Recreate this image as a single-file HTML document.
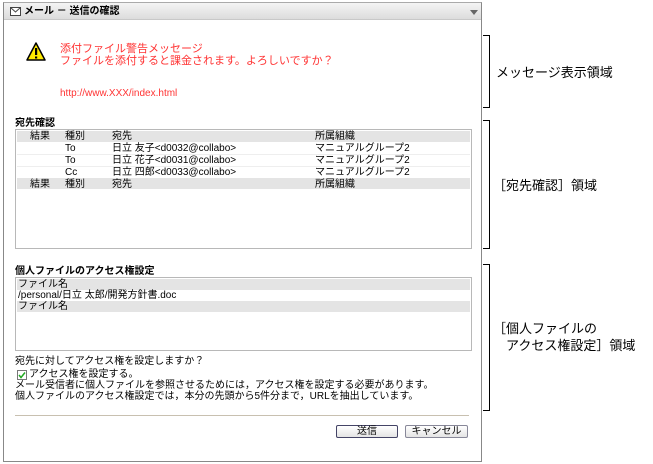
<!DOCTYPE html>
<html><head><meta charset="utf-8"><style>
*{margin:0;padding:0;box-sizing:border-box}
body{width:653px;height:464px;background:#fff;position:relative;overflow:hidden;font-family:"Liberation Sans","Noto Sans CJK JP",sans-serif;font-size:10px;color:#000}
.a{position:absolute;white-space:nowrap;line-height:11px}
.win{position:absolute;left:3px;top:2px;width:479px;height:460px;border:1px solid #888;border-top:1px solid #aaa}
.tb{position:absolute;left:0;top:0;width:100%;height:17px;background:linear-gradient(#f4f4f4,#dcdcdc);border-bottom:1px solid #c8c8c8}
.box{position:absolute;border:1px solid #b8b8b8;background:#fff}
.hr{position:absolute;left:1px;right:1px;height:11px;background:#e4e4e4}
.r{position:absolute;left:1px;right:1px;height:1px;background:#eee}
.br{position:absolute;left:483px;width:7px;border:1px solid #000;border-left:none}
.lb{font-size:13px;line-height:17px}
.btn{position:absolute;height:13px;border:1px solid #556;border-radius:2px;background:linear-gradient(#fff,#e4e4e4);font-size:10px;text-align:center;line-height:11px}
</style></head><body>
<div class="win">
<div class="tb">
<svg class="a" style="left:6px;top:4px" width="11" height="9"><rect x="0.5" y="0.5" width="10" height="8" fill="#fff" stroke="#444"/><path d="M0.5 0.5L5.5 5L10.5 0.5" fill="none" stroke="#444"/></svg>
<div class="a" style="left:20px;top:3px;font-size:10px;font-weight:bold">メール － 送信の確認</div>
<svg class="a" style="left:466px;top:7px" width="8" height="5"><path d="M0 0H8L4 5Z" fill="#666"/></svg>
</div>
</div>
<svg class="a" style="left:26px;top:42px" width="20" height="20"><path d="M10 1L19 18H1Z" fill="#ffea00" stroke="#000" stroke-width="1.5" stroke-linejoin="round"/><rect x="9" y="6" width="2.2" height="7" fill="#000"/><rect x="9" y="14.5" width="2.2" height="2" fill="#000"/></svg>
<div class="a" style="left:60px;top:43px;color:#f33;font-size:11px;line-height:12px">添付ファイル警告メッセージ<br>ファイルを添付すると課金されます。よろしいですか？</div>
<div class="a" style="left:60px;top:88px;color:#f33;font-size:10px">http://www.XXX/index.html</div>
<div class="a" style="left:15px;top:118px;font-weight:bold">宛先確認</div>
<div class="box" style="left:15px;top:129px;width:457px;height:120px">
<div class="hr" style="top:1px"></div>
<div class="r" style="top:24px"></div><div class="r" style="top:36px"></div>
<div class="hr" style="top:48px"></div>
</div>
<div class="a" style="left:30px;top:131px">結果</div><div class="a" style="left:65px;top:131px">種別</div><div class="a" style="left:112px;top:131px">宛先</div><div class="a" style="left:315px;top:131px">所属組織</div>
<div class="a" style="left:65px;top:143px">To</div><div class="a" style="left:112px;top:143px">日立 友子&lt;d0032@collabo&gt;</div><div class="a" style="left:315px;top:143px">マニュアルグループ2</div>
<div class="a" style="left:65px;top:155px">To</div><div class="a" style="left:112px;top:155px">日立 花子&lt;d0031@collabo&gt;</div><div class="a" style="left:315px;top:155px">マニュアルグループ2</div>
<div class="a" style="left:65px;top:167px">Cc</div><div class="a" style="left:112px;top:167px">日立 四郎&lt;d0033@collabo&gt;</div><div class="a" style="left:315px;top:167px">マニュアルグループ2</div>
<div class="a" style="left:30px;top:179px">結果</div><div class="a" style="left:65px;top:179px">種別</div><div class="a" style="left:112px;top:179px">宛先</div><div class="a" style="left:315px;top:179px">所属組織</div>
<div class="a" style="left:15px;top:266px;font-weight:bold">個人ファイルのアクセス権設定</div>
<div class="box" style="left:15px;top:277px;width:457px;height:74px">
<div class="hr" style="top:1px"></div><div class="hr" style="top:23px"></div>
</div>
<div class="a" style="left:18px;top:279px">ファイル名</div>
<div class="a" style="left:18px;top:290px">/personal/日立 太郎/開発方針書.doc</div>
<div class="a" style="left:18px;top:301px">ファイル名</div>
<div class="a" style="left:15px;top:356px">宛先に対してアクセス権を設定しますか？</div>
<svg class="a" style="left:17px;top:370px" width="10" height="10"><rect x="0.5" y="0.5" width="9" height="9" fill="#fff" stroke="#777"/><path d="M2 5L4 7.5L8 2.5" fill="none" stroke="#2a2" stroke-width="1.5"/></svg>
<div class="a" style="left:29px;top:369px">アクセス権を設定する。</div>
<div class="a" style="left:15px;top:380px">メール受信者に個人ファイルを参照させるためには，アクセス権を設定する必要があります。<br>個人ファイルのアクセス権設定では，本分の先頭から5件分まで，URLを抽出しています。</div>
<div class="a" style="left:15px;top:415px;width:454px;height:1px;background:#c8c0b0"></div>
<div class="btn" style="left:336px;top:425px;width:62px;border-color:#446">送信</div>
<div class="btn" style="left:405px;top:425px;width:63px;border-color:#889">キャンセル</div>
<div class="br" style="top:35px;height:73px"></div>
<div class="br" style="top:120px;height:129px"></div>
<div class="br" style="top:264px;height:147px"></div>
<div class="a lb" style="left:496px;top:64px">メッセージ表示領域</div>
<div class="a lb" style="left:493px;top:177px">［宛先確認］領域</div>
<div class="a lb" style="left:493px;top:320px">［個人ファイルの</div>
<div class="a lb" style="left:506px;top:337px">アクセス権設定］領域</div>
</body></html>
